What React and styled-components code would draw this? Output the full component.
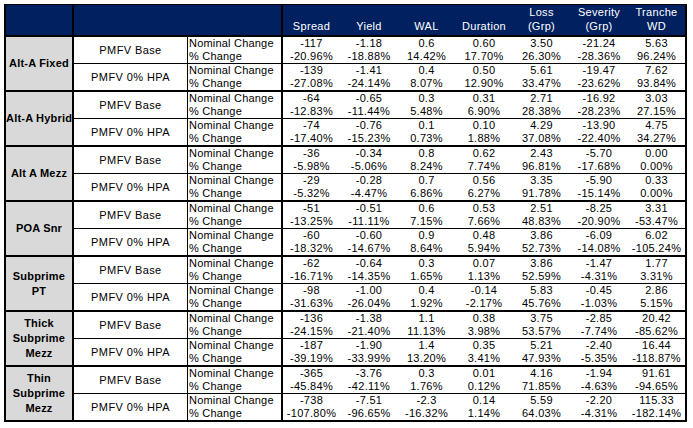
import React from "react";
import styled, { createGlobalStyle } from "styled-components";

const GlobalStyle = createGlobalStyle`
  body {
    margin: 0;
    background: #fff;
    font-family: "Liberation Sans", Arial, sans-serif;
  }
`;

const Page = styled.div`
  padding: 4px 0 0 4px;
`;

const Table = styled.table`
  border-collapse: separate;
  border-spacing: 0;
  table-layout: fixed;
  width: 683px;
  border: 2px solid #000;
  border-top-width: 1px;
  font-size: 11px;
  color: #000;

  td, th {
    box-sizing: border-box;
    padding: 0;
  }
`;

const edgeWidth = { thin: "1px", thick: "2px", none: "0" };

const HeadCell = styled.th`
  height: 31px;
  background: #002060;
  color: #fff;
  font-weight: normal;
  line-height: 14px;
  letter-spacing: 0.3px;
  text-align: center;
  vertical-align: bottom;
  padding-bottom: 2px !important;
  border-bottom: 2px solid #000;
  border-right: ${(p) => (p.$divider ? "2px solid #000" : "none")};
`;

const GroupCell = styled.td`
  background: #d9d9d9;
  font-weight: bold;
  line-height: 15px;
  letter-spacing: 0.2px;
  white-space: nowrap;
  text-align: center;
  vertical-align: middle;
  border-right: 2px solid #000;
  border-bottom: ${(p) => (p.$last ? "0" : "2px solid #000")};
`;

const BodyCell = styled.td`
  height: ${(p) => 26 + parseInt(edgeWidth[p.$edge], 10)}px;
  line-height: 13px;
  vertical-align: middle;
  border-bottom: ${(p) => edgeWidth[p.$edge]} solid #000;
`;

const ScenarioCell = styled(BodyCell)`
  text-align: center;
  letter-spacing: 0.4px;
  border-right: 1px solid #000;
`;

const MeasureCell = styled(BodyCell)`
  text-align: left;
  padding-left: 1px !important;
  letter-spacing: 0.2px;
  white-space: nowrap;
  border-right: 2px solid #000;
`;

const ValueCell = styled(BodyCell)`
  text-align: center;
  letter-spacing: 0.3px;
  white-space: nowrap;
`;

const Line = styled.div`
  height: 13px;
`;

const columns = [
  ["Spread"],
  ["Yield"],
  ["WAL"],
  ["Duration"],
  ["Loss", "(Grp)"],
  ["Severity", "(Grp)"],
  ["Tranche", "WD"],
];

const colWidths = [68, 114, 95, 57, 58, 57, 58, 57, 58, 57];

const groups = [
  {
    name: ["Alt-A Fixed"],
    rows: [
      [["-117", "-1.18", "0.6", "0.60", "3.50", "-21.24", "5.63"],
       ["-20.96%", "-18.88%", "14.42%", "17.70%", "26.30%", "-28.36%", "96.24%"]],
      [["-139", "-1.41", "0.4", "0.50", "5.61", "-19.47", "7.62"],
       ["-27.08%", "-24.14%", "8.07%", "12.90%", "33.47%", "-23.62%", "93.84%"]],
    ],
  },
  {
    name: ["Alt-A Hybrid"],
    rows: [
      [["-64", "-0.65", "0.3", "0.31", "2.71", "-16.92", "3.03"],
       ["-12.83%", "-11.44%", "5.48%", "6.90%", "28.38%", "-28.23%", "27.15%"]],
      [["-74", "-0.76", "0.1", "0.10", "4.29", "-13.90", "4.75"],
       ["-17.40%", "-15.23%", "0.73%", "1.88%", "37.08%", "-22.40%", "34.27%"]],
    ],
  },
  {
    name: ["Alt A Mezz"],
    rows: [
      [["-36", "-0.34", "0.8", "0.62", "2.43", "-5.70", "0.00"],
       ["-5.98%", "-5.06%", "8.24%", "7.74%", "96.81%", "-17.68%", "0.00%"]],
      [["-29", "-0.28", "0.7", "0.56", "3.35", "-5.90", "0.33"],
       ["-5.32%", "-4.47%", "6.86%", "6.27%", "91.78%", "-15.14%", "0.00%"]],
    ],
  },
  {
    name: ["POA Snr"],
    rows: [
      [["-51", "-0.51", "0.6", "0.53", "2.51", "-8.25", "3.31"],
       ["-13.25%", "-11.11%", "7.15%", "7.66%", "48.83%", "-20.90%", "-53.47%"]],
      [["-60", "-0.60", "0.9", "0.48", "3.86", "-6.09", "6.02"],
       ["-18.32%", "-14.67%", "8.64%", "5.94%", "52.73%", "-14.08%", "-105.24%"]],
    ],
  },
  {
    name: ["Subprime", "PT"],
    rows: [
      [["-62", "-0.64", "0.3", "0.07", "3.86", "-1.47", "1.77"],
       ["-16.71%", "-14.35%", "1.65%", "1.13%", "52.59%", "-4.31%", "3.31%"]],
      [["-98", "-1.00", "0.4", "-0.14", "5.83", "-0.45", "2.86"],
       ["-31.63%", "-26.04%", "1.92%", "-2.17%", "45.76%", "-1.03%", "5.15%"]],
    ],
  },
  {
    name: ["Thick", "Subprime", "Mezz"],
    rows: [
      [["-136", "-1.38", "1.1", "0.38", "3.75", "-2.85", "20.42"],
       ["-24.15%", "-21.40%", "11.13%", "3.98%", "53.57%", "-7.74%", "-85.62%"]],
      [["-187", "-1.90", "1.4", "0.35", "5.21", "-2.40", "16.44"],
       ["-39.19%", "-33.99%", "13.20%", "3.41%", "47.93%", "-5.35%", "-118.87%"]],
    ],
  },
  {
    name: ["Thin", "Subprime", "Mezz"],
    rows: [
      [["-365", "-3.76", "0.3", "0.01", "4.16", "-1.94", "91.61"],
       ["-45.84%", "-42.11%", "1.76%", "0.12%", "71.85%", "-4.63%", "-94.65%"]],
      [["-738", "-7.51", "-2.3", "0.14", "5.59", "-2.20", "115.33"],
       ["-107.80%", "-96.65%", "-16.32%", "1.14%", "64.03%", "-4.31%", "-182.14%"]],
    ],
  },
];

const scenarios = ["PMFV Base", "PMFV 0% HPA"];

function App() {
  return (
    <Page>
      <GlobalStyle />
      <Table>
        <colgroup>
          {colWidths.map((w, i) => (
            <col key={i} style={{ width: w }} />
          ))}
        </colgroup>
        <thead>
          <tr>
            <HeadCell $divider />
            <HeadCell colSpan={2} $divider />
            {columns.map((lines, i) => (
              <HeadCell key={i}>
                {lines.map((l, j) => (
                  <div key={j}>{l}</div>
                ))}
              </HeadCell>
            ))}
          </tr>
        </thead>
        <tbody>
          {groups.map((group, g) => {
            const last = g === groups.length - 1;
            return group.rows.map(([nominal, pct], r) => {
              const edge = r === 0 ? "thin" : last ? "none" : "thick";
              return (
                <tr key={`${g}-${r}`}>
                  {r === 0 && (
                    <GroupCell rowSpan={2} $last={last}>
                      {group.name.map((n, k) => (
                        <div key={k}>{n}</div>
                      ))}
                    </GroupCell>
                  )}
                  <ScenarioCell $edge={edge}>{scenarios[r]}</ScenarioCell>
                  <MeasureCell $edge={edge}>
                    <Line>Nominal Change</Line>
                    <Line>% Change</Line>
                  </MeasureCell>
                  {nominal.map((v, c) => (
                    <ValueCell key={c} $edge={edge}>
                      <Line>{v}</Line>
                      <Line>{pct[c]}</Line>
                    </ValueCell>
                  ))}
                </tr>
              );
            });
          })}
        </tbody>
      </Table>
    </Page>
  );
}

export default App;
